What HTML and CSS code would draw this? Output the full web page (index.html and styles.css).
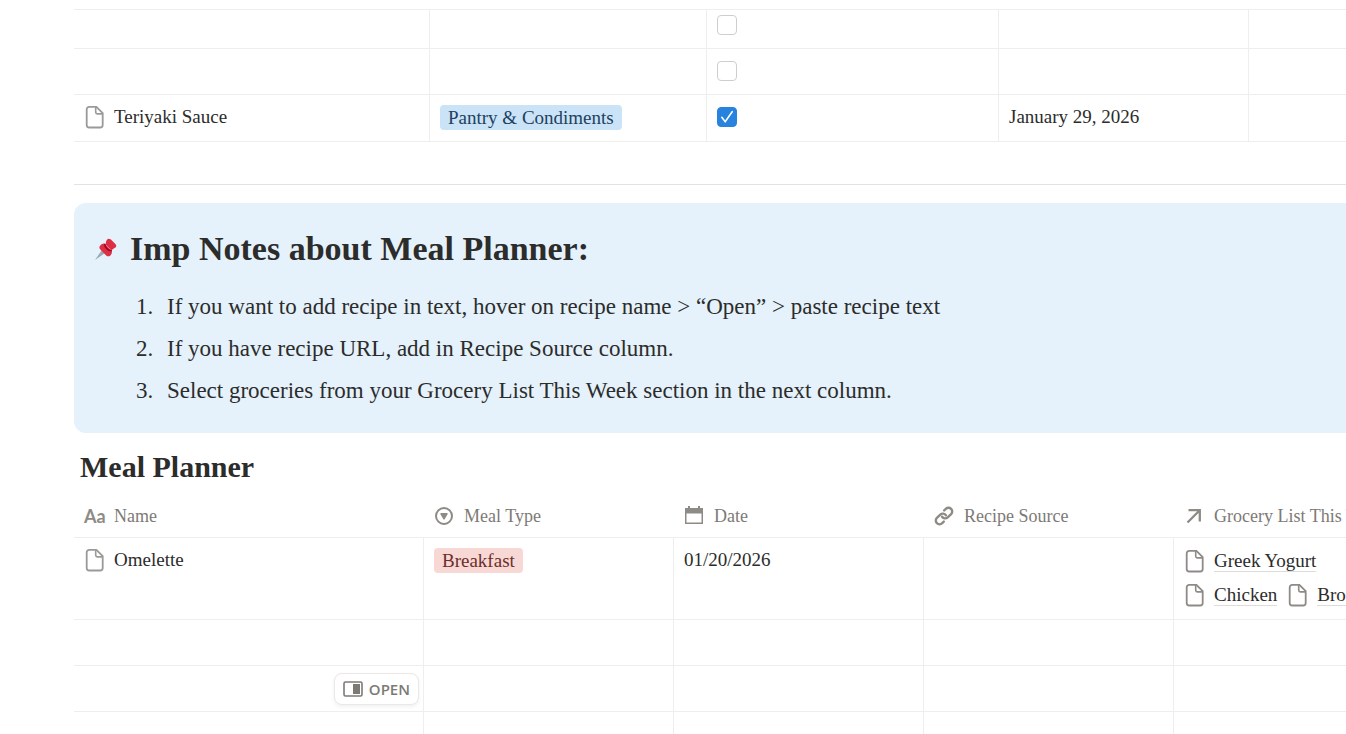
FILE: index.html
```html
<!DOCTYPE html>
<html lang="en">
<head>
  <meta charset="UTF-8">
  <meta name="viewport" content="width=device-width, initial-scale=1.0">
  <title>Meal Planner</title>
  <link rel="stylesheet" href="styles.css">
</head>
<body>
  <!-- Shared icons -->
  <svg class="sprite" aria-hidden="true">
    <symbol id="icon-page" viewBox="0 0 20 24">
      <path d="M4.200 1.900h7.200l6.300 6.300V20a2.500 2.500 0 0 1-2.500 2.500H4.200A2.500 2.500 0 0 1 1.700 20V4.400a2.500 2.500 0 0 1 2.500-2.500z" fill="none" stroke="currentColor" stroke-width="1.800"/>
      <path d="M10.700 2v5.100a1.800 1.800 0 0 0 1.800 1.800h5.100" fill="none" stroke="currentColor" stroke-width="1.600"/>
    </symbol>
  </svg>

  <main class="page">
    <!-- Grocery list -->
    <table class="grid grocery">
      <colgroup>
        <col class="col-item">
        <col class="col-category">
        <col class="col-check">
        <col class="col-date">
        <col>
      </colgroup>
      <tbody>
        <tr class="first">
          <td></td>
          <td></td>
          <td><input type="checkbox" class="check" aria-label="In stock"></td>
          <td></td>
          <td></td>
        </tr>
        <tr>
          <td></td>
          <td></td>
          <td><input type="checkbox" class="check" aria-label="In stock"></td>
          <td></td>
          <td></td>
        </tr>
        <tr>
          <td>
            <div class="item">
              <svg class="page-icon"><use href="#icon-page"/></svg>
              <span>Teriyaki Sauce</span>
            </div>
          </td>
          <td><span class="tag blue">Pantry &amp; Condiments</span></td>
          <td><input type="checkbox" class="check" aria-label="In stock" checked></td>
          <td>January 29, 2026</td>
          <td></td>
        </tr>
      </tbody>
    </table>

    <hr class="divider">

    <!-- Notes -->
    <section class="callout">
      <svg class="pin" viewBox="0 0 24 24" aria-hidden="true">
        <path d="M1 23L8.200 12.600l3.200 3.200z" fill="#99aab5"/>
        <path d="M12.200 4.200c.6-2.700 3-3.300 4.700-1.600l4.500 4.300c1.600 1.700 1 3.700-1.300 4.300l-2.600 2-6-6z" fill="#dd2e44"/>
        <path d="M10.500 6.600l7.200 7.200c.8 1.600-.3 3.800-1.600 5-1.200.9-2.800.7-3.900-.4l-5.900-5.900c-1.200-1.200-1.200-2.900-.1-4 1.300-1.300 3-2.400 4.300-1.900z" fill="#dd2e44"/>
        <path d="M10.800 6.900c.6 3.400 3.400 6.200 6.800 6.700-3.400 1-8-3.400-6.800-6.700z" fill="#a0041e" stroke="#a0041e"/>
      </svg>
      <div class="callout-body">
        <h1>Imp Notes about Meal Planner:</h1>
        <ol>
          <li>If you want to add recipe in text, hover on recipe name &gt; “Open” &gt; paste recipe text</li>
          <li>If you have recipe URL, add in Recipe Source column.</li>
          <li>Select groceries from your Grocery List This Week section in the next column.</li>
        </ol>
      </div>
    </section>

    <!-- Meal planner -->
    <h2>Meal Planner</h2>
    <table class="grid planner">
      <colgroup>
        <col class="col-name">
        <col class="col-plan">
        <col class="col-plan">
        <col class="col-plan">
        <col>
      </colgroup>
      <thead>
        <tr>
          <th>
            <div class="head">
              <span class="head-aa" aria-hidden="true">Aa</span>
              <span>Name</span>
            </div>
          </th>
          <th>
            <div class="head">
              <svg class="head-icon" viewBox="0 0 20 20"><circle cx="10" cy="10" r="8" fill="none" stroke="currentColor" stroke-width="2"/><path d="M7 7.800h6L10 13z" fill="currentColor" stroke="currentColor" stroke-width="1.400" stroke-linejoin="round"/></svg>
              <span>Meal Type</span>
            </div>
          </th>
          <th>
            <div class="head">
              <svg class="head-icon" viewBox="0 0 20 20"><path d="M1 2h3V0h2v2h8V0h2v2h3v16H1zm1.500 5.500v9h15v-9z" fill="currentColor" fill-rule="evenodd"/></svg>
              <span>Date</span>
            </div>
          </th>
          <th>
            <div class="head">
              <svg class="head-icon" viewBox="0 0 20 20"><g fill="none" stroke="currentColor" stroke-width="2.400" stroke-linecap="round"><path d="M10.200 4.400l1.600-1.500a3.700 3.700 0 0 1 5.300 5.300l-3.400 3.200a3.700 3.700 0 0 1-5.600-.6"/><path d="M9.800 15.600l-1.600 1.500a3.700 3.700 0 0 1-5.300-5.300l3.400-3.200a3.700 3.700 0 0 1 5.600.6"/></g></svg>
              <span>Recipe Source</span>
            </div>
          </th>
          <th>
            <div class="head">
              <svg class="head-icon" viewBox="0 0 20 20"><path d="M3.500 16.500L15.500 4.500M4.500 4.200h11.300v11.300" fill="none" stroke="currentColor" stroke-width="2.300"/></svg>
              <span>Grocery List This Week</span>
            </div>
          </th>
        </tr>
      </thead>
      <tbody>
        <tr class="meal">
          <td>
            <div class="item">
              <svg class="page-icon"><use href="#icon-page"/></svg>
              <span>Omelette</span>
            </div>
          </td>
          <td><span class="tag red">Breakfast</span></td>
          <td>01/20/2026</td>
          <td></td>
          <td>
            <div class="relations">
              <div class="relation-row">
                <a class="item" href="#"><svg class="page-icon"><use href="#icon-page"/></svg><span>Greek Yogurt</span></a>
              </div>
              <div class="relation-row">
                <a class="item" href="#"><svg class="page-icon"><use href="#icon-page"/></svg><span>Chicken</span></a>
                <a class="item" href="#"><svg class="page-icon"><use href="#icon-page"/></svg><span>Broccoli</span></a>
              </div>
            </div>
          </td>
        </tr>
        <tr><td></td><td></td><td></td><td></td><td></td></tr>
        <tr>
          <td class="open-cell">
            <button type="button" class="open">
              <svg class="open-icon" viewBox="0 0 20 16"><rect x="1" y="1" width="18" height="14" rx="1.500" fill="none" stroke="currentColor" stroke-width="1.600"/><path d="M10 3h7v10h-7z" fill="currentColor"/></svg>
              <span>OPEN</span>
            </button>
          </td>
          <td></td><td></td><td></td><td></td>
        </tr>
        <tr><td></td><td></td><td></td><td></td><td></td></tr>
      </tbody>
    </table>
  </main>
</body>
</html>
```
FILE: styles.css
```css
* {
  box-sizing: border-box;
}
body {
  margin: 0;
  background: #fff;
  color: #2c2c2b;
  font-family: "Liberation Serif", serif;
  font-size: 19px;
  line-height: 26px;
}
.sprite {
  display: none;
}
.page {
  height: 100vh;
  padding: 9px 0 0 74px;
  overflow: hidden;
}

/* tables */
.grid {
  width: 100%;
  table-layout: fixed;
  border-collapse: separate;
  border-spacing: 0;
}
.grid td {
  height: 46px;
  padding: 9px 10px;
  border-right: 1px solid #eeeeec;
  border-bottom: 1px solid #eeeeec;
  vertical-align: top;
  white-space: nowrap;
  overflow: hidden;
}
.grid td:last-child {
  padding-right: 0;
  border-right: none;
}
.grocery .first td {
  height: 40px;
  padding-top: 2px;
  border-top: 1px solid #eeeeec;
}
.grocery tr:last-child td {
  height: 47px;
}
.col-item {
  width: 356px;
}
.col-category {
  width: 277px;
}
.col-check {
  width: 292px;
}
.col-date,
.col-plan {
  width: 250px;
}
.col-name {
  width: 350px;
}
.item {
  display: flex;
  align-items: center;
  gap: 9px;
  color: inherit;
  text-decoration: none;
}
.page-icon {
  flex: none;
  width: 20px;
  height: 24px;
  margin-left: 1px;
  color: #9b9a97;
}
.tag {
  display: block;
  width: fit-content;
  margin-top: 1px;
  padding: 0 8px;
  border-radius: 4px;
  line-height: 25px;
}
.blue {
  background: #cbe3f7;
  color: #20415f;
}
.red {
  background: #f8d8d4;
  color: #6b2f2b;
}
.check {
  display: block;
  appearance: none;
  width: 20px;
  height: 20px;
  margin: 3px 0 0;
  border: 1px solid #cfcecb;
  border-radius: 4px;
}
.check:checked {
  border-color: #2783de;
  background: #2783de url("data:image/svg+xml,%3Csvg xmlns='http://www.w3.org/2000/svg' viewBox='0 0 18 18'%3E%3Cpath d='M3.800 9.300l3.400 4.400 7-10' fill='none' stroke='white' stroke-width='1.600' stroke-linecap='round'/%3E%3C/svg%3E") center / contain;
}

.divider {
  height: 1px;
  margin: 42px 0 18px;
  border: none;
  background: #e3e2e0;
}

/* notes */
.callout {
  display: flex;
  gap: 12px;
  padding: 24px 20px 26px;
  border-radius: 12px 0 0 12px;
  background: #e5f2fc;
}
.pin {
  flex: none;
  width: 24px;
  height: 24px;
  margin-top: 10px;
}
.callout h1 {
  margin: 0;
  font-size: 34px;
  line-height: 44px;
}
.callout ol {
  display: flex;
  flex-direction: column;
  gap: 10px;
  margin: 20px 0 0;
  padding-left: 29px;
  font-size: 23px;
  line-height: 32px;
}
.callout li {
  padding-left: 8px;
}

/* planner */
h2 {
  margin: 16px 0 0 6px;
  font-size: 30px;
  line-height: 36px;
}
.planner {
  margin-top: 9px;
}
.planner th {
  height: 44px;
  padding: 0 10px;
  border-bottom: 1px solid #eeeeec;
  color: #7d7a75;
  font-size: 18px;
  font-weight: normal;
  text-align: left;
  white-space: nowrap;
  overflow: hidden;
}
.planner th:last-child {
  padding-right: 0;
}
.head {
  display: flex;
  align-items: center;
  gap: 10px;
}
.head-icon,
.head-aa {
  flex: none;
  width: 20px;
  height: 20px;
  color: #8e8b86;
}
.head-aa {
  font-family: Lato, sans-serif;
  font-weight: bold;
  line-height: 20px;
}
.meal td {
  height: 82px;
}
.relations {
  display: flex;
  flex-direction: column;
  gap: 8px;
  padding-top: 1px;
}
.relation-row {
  display: flex;
  gap: 10px;
  height: 26px;
}
.relations .page-icon {
  color: #8e8b86;
}
.relations .item span {
  border-bottom: 1px solid #dddcda;
  line-height: 20px;
}
.grid .open-cell {
  padding: 7px 4px 6px;
}
.open {
  display: flex;
  align-items: center;
  gap: 6px;
  height: 32px;
  margin-left: auto;
  padding: 0 8px;
  border: 1px solid #e9e8e6;
  border-radius: 8px;
  background: #fff;
  box-shadow: 0 2px 4px rgba(0, 0, 0, 0.06);
  color: #7d7a75;
  font-family: "Open Sans", sans-serif;
  font-size: 15px;
  font-weight: 600;
}
.open-icon {
  width: 20px;
  height: 16px;
}
```
